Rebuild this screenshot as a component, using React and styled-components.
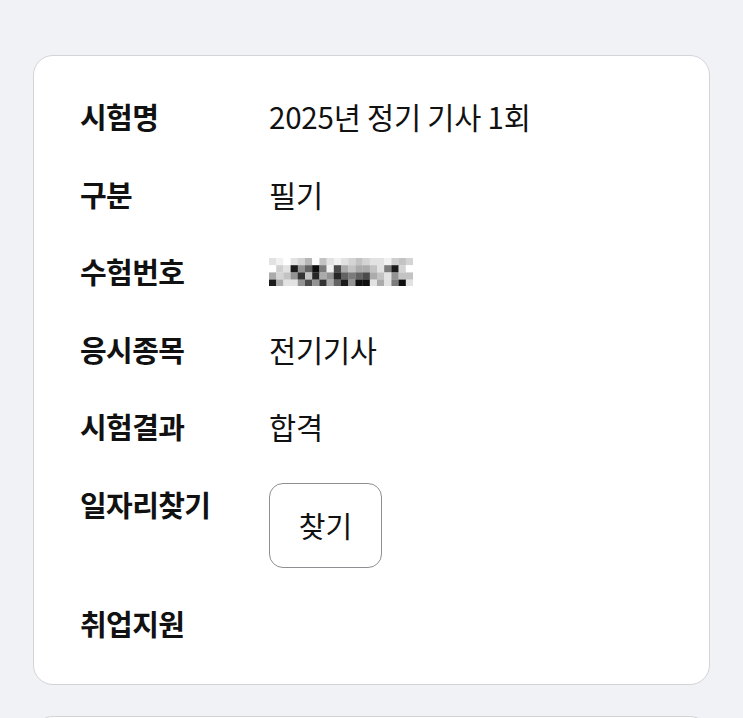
import React from "react";
import styled, { createGlobalStyle } from "styled-components";

const Global = createGlobalStyle`
  html, body { margin: 0; padding: 0; background: #f1f2f6; }
  body { font-family: "Noto Sans CJK KR", "Noto Sans", sans-serif; color: #111; }
`;

const Page = styled.div`
  padding: 55px 33px 0;
  display: flex;
  flex-direction: column;
  gap: 31px;
  height: 718px;
  box-sizing: border-box;
  overflow: hidden;
`;

const Card = styled.div`
  background: #fff;
  border: 1.5px solid #d4d4d8;
  border-radius: 20px;
  padding: 41px 46px 42px;
  display: flex;
  flex-direction: column;
  gap: 39.5px;
  flex-shrink: 0;
  min-height: ${(p) => p.$minH || "auto"};
`;

const Row = styled.div`
  display: flex;
  align-items: flex-start;
`;

const Label = styled.div`
  width: 189px;
  flex-shrink: 0;
  font-size: 29px;
  font-weight: 700;
  line-height: 38px;
  letter-spacing: -0.6px;
`;

const Value = styled.div`
  font-size: 29.5px;
  font-weight: 400;
  line-height: 38px;
  letter-spacing: -0.2px;
  display: flex;
  align-items: center;
  height: 38px;
`;

const FindButton = styled.button`
  margin-top: -2px;
  margin-bottom: -3px;
  width: 113px;
  height: 85px;
  border: 1.5px solid #8e8e93;
  border-radius: 14px;
  background: #fff;
  font-family: inherit;
  font-size: 29px;
  color: #111;
  padding: 0;
`;

const mosaic = [
  [0.12, 0.06, 0, 0.12, 0.18, 0.3, 0, 0.25, 0.12, 0.06, 0.12, 0.18, 0.25, 0.18, 0.12, 0.12, 0.06, 0.2, 0.25, 0.18, 0],
  [0, 0.2, 0.12, 0.95, 0.45, 0.65, 1, 0.55, 0.06, 0.75, 0.35, 0.25, 0.35, 0.35, 0.25, 0.12, 0.55, 0.95, 0.18, 0, 0],
  [0.35, 0.18, 0.25, 0.45, 0.85, 0.25, 0.9, 0.35, 0.45, 0.9, 0.65, 0.55, 0.65, 0.75, 0.35, 0.25, 0.12, 0.45, 0.25, 0.25, 0],
  [0.95, 0.35, 0.12, 0.12, 0.45, 0.75, 0.45, 0.85, 0.35, 0.65, 0.95, 0.45, 1, 1, 0.12, 0.35, 0.12, 0.55, 1, 0.12, 0],
];

function Mosaic() {
  const s = 7.2;
  return (
    <svg width={mosaic[0].length * s} height={mosaic.length * s} style={{ marginTop: 2 }}>
      {mosaic.map((row, y) =>
        row.map((v, x) => {
          const c = Math.round(255 - v * 240);
          return (
            <rect key={`${x}-${y}`} x={x * s} y={y * s} width={s + 0.2} height={s + 0.2} fill={`rgb(${c},${c},${c})`} />
          );
        })
      )}
    </svg>
  );
}

const rows = [
  { label: "시험명", value: "2025년 정기 기사 1회" },
  { label: "구분", value: "필기" },
  { label: "수험번호", value: <Mosaic /> },
  { label: "응시종목", value: "전기기사" },
  { label: "시험결과", value: "합격" },
];

export default function App() {
  return (
    <>
      <Global />
      <Page>
        <Card>
          {rows.map((r) => (
            <Row key={r.label}>
              <Label>{r.label}</Label>
              <Value>{r.value}</Value>
            </Row>
          ))}
          <Row>
            <Label>일자리찾기</Label>
            <FindButton>찾기</FindButton>
          </Row>
          <Row>
            <Label>취업지원</Label>
          </Row>
        </Card>
        <Card $minH="200px" />
      </Page>
    </>
  );
}
